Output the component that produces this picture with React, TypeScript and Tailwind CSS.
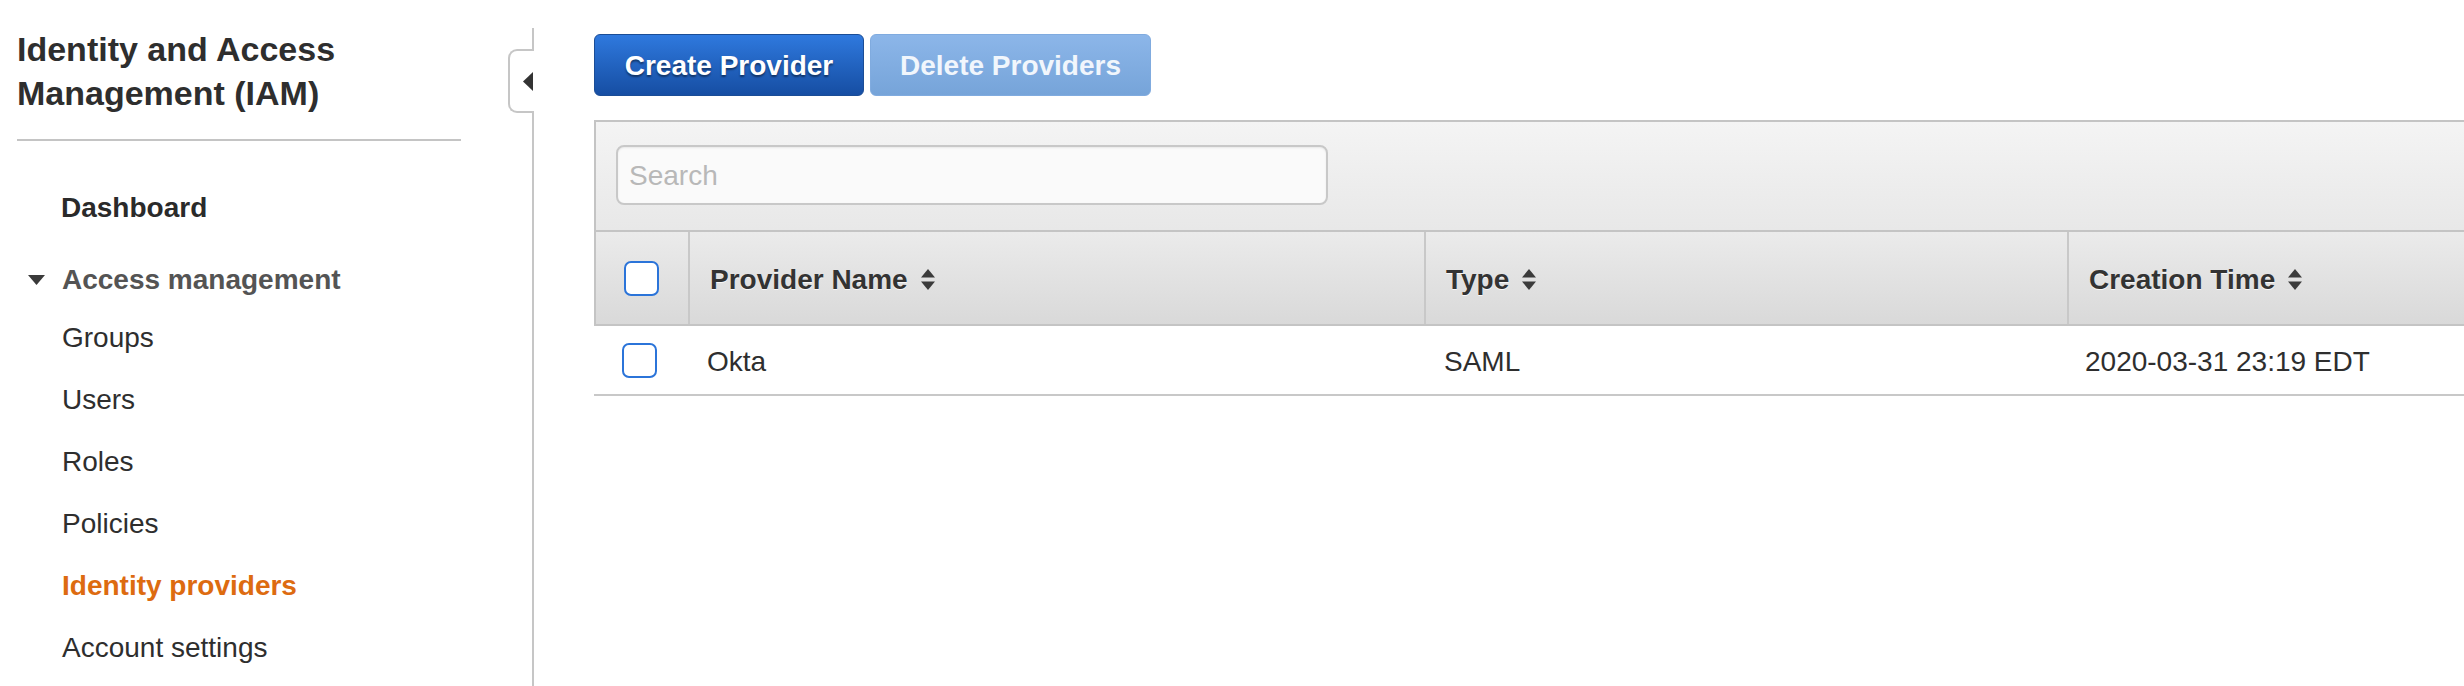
import React from 'react';

// IAM > Identity providers list page (AWS console, classic look)

function SortIcon() {
  return (
    <svg width="14" height="21" viewBox="0 0 14 21" className="ml-[13px] shrink-0">
      <path d="M7 0L14 8.5H0Z" fill="#3b3b3b" />
      <path d="M0 12.5H14L7 21Z" fill="#3b3b3b" />
    </svg>
  );
}

function Checkbox() {
  return <span className="block h-[35px] w-[35px] rounded-[7px] border-2 border-[#2b74d9] bg-white" />;
}

const navItems = ['Groups', 'Users', 'Roles', 'Policies', 'Identity providers', 'Account settings'];

const columns = ['Provider Name', 'Type', 'Creation Time'];

export default function App() {
  return (
    <div className="flex min-h-[686px] w-full overflow-hidden bg-white font-['Liberation_Sans',Arial,Helvetica,sans-serif] text-[#333]">
      <aside className="flex w-[534px] shrink-0">
        <div className="w-[508px] pl-[17px] pt-[27px]">
          <h1 className="text-[34px] font-bold leading-[44px] text-[#2e2e2e]">
            Identity and Access
            <br />
            Management (IAM)
          </h1>
          <div className="mt-[24px] h-[2px] w-[444px] bg-[#c4c4c4]" />
          <nav className="mt-[36px]">
            <div className="flex h-[62px] items-center pl-[44px] text-[28px] font-bold text-[#2a2a2a]">Dashboard</div>
            <div className="mt-[14px] flex h-[54px] items-center pl-[11px] text-[28px] font-bold text-[#545454]">
              <svg width="17" height="10" viewBox="0 0 17 10" className="mr-[17px] shrink-0">
                <path d="M0 0H17L8.5 10Z" fill="#3a3a3a" />
              </svg>
              Access management
            </div>
            {navItems.map((item) => (
              <div
                key={item}
                className={
                  item === 'Identity providers'
                    ? 'flex h-[62px] items-center pl-[45px] text-[28px] font-bold text-[#dd6b10]'
                    : 'flex h-[62px] items-center pl-[45px] text-[28px] text-[#2e2e2e]'
                }
              >
                {item}
              </div>
            ))}
          </nav>
        </div>
        <div className="flex w-[26px] flex-col pt-[28px]">
          <div className="h-[21px] border-r-2 border-[#c6c6c6]" />
          <div className="flex h-[64px] items-center justify-end rounded-l-[9px] border-y-2 border-l-2 border-[#c6c6c6] bg-white pr-[1px]">
            <svg width="10" height="19" viewBox="0 0 10 19">
              <path d="M10 0V19L0 9.5Z" fill="#333" />
            </svg>
          </div>
          <div className="flex-1 border-r-2 border-[#c6c6c6]" />
        </div>
      </aside>

      <main className="min-w-0 flex-1 pl-[60px] pt-[34px]">
        <div className="flex gap-[6px]">
          <button className="h-[62px] w-[270px] rounded-[6px] border border-[#1b4d96] bg-gradient-to-b from-[#2f79de] to-[#164ea3] pt-[2px] text-[28px] font-bold text-white [text-shadow:0_2px_2px_rgba(0,0,0,0.45)]">
            Create Provider
          </button>
          <button className="h-[62px] w-[281px] rounded-[6px] border border-[#80abdf] bg-gradient-to-b from-[#8cb6e9] to-[#76a4d9] pt-[2px] text-[28px] font-bold text-[#f1f6fc]">
            Delete Providers
          </button>
        </div>

        <div className="mt-[24px]">
          <div className="flex h-[112px] border-y-2 border-l-2 border-[#c4c4c4] bg-gradient-to-b from-[#f4f4f4] to-[#e8e8e8] pl-[20px] pt-[23px]">
            <input
              placeholder="Search"
              className="h-[60px] w-[712px] rounded-[8px] border-2 border-[#c8c8c8] bg-[#fafafa] pl-[11px] pt-[2px] text-[28px] shadow-[inset_0_1px_2px_rgba(0,0,0,0.08)] outline-none placeholder:text-[#b8b8b8]"
            />
          </div>

          <div className="grid h-[94px] grid-cols-[92px_736px_643px_1fr] border-b-2 border-l-2 border-[#c4c4c4] bg-gradient-to-b from-[#ebebeb] to-[#d9d9d9]">
            <div className="flex items-center pl-[28px]">
              <Checkbox />
            </div>
            {columns.map((col) => (
              <div
                key={col}
                className="flex items-center border-l-2 border-[#c8c8c8] pl-[20px] pt-[3px] text-[28px] font-bold text-[#333] [text-shadow:0_1px_0_rgba(255,255,255,0.8)]"
              >
                {col}
                <SortIcon />
              </div>
            ))}
          </div>

          <div className="grid h-[70px] grid-cols-[94px_737px_643px_1fr] border-b-2 border-[#c8c8c8] text-[28px] text-[#2e2e2e]">
            <div className="flex items-center pl-[28px]">
              <Checkbox />
            </div>
            <div className="flex items-center pl-[19px] pt-[3px]">Okta</div>
            <div className="flex items-center pl-[19px] pt-[3px]">SAML</div>
            <div className="flex items-center pl-[17px] pt-[3px]">2020-03-31 23:19 EDT</div>
          </div>
        </div>
      </main>
    </div>
  );
}
